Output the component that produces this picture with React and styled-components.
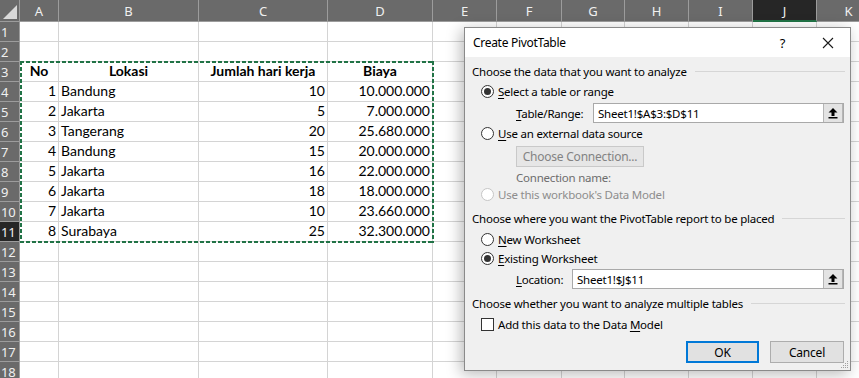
import React from 'react';
import styled, { createGlobalStyle } from 'styled-components';

const GlobalStyle = createGlobalStyle`
  html, body {
    margin: 0;
    padding: 0;
    background: #ffffff;
    overflow: hidden;
  }
`;

const COLS = ['A', 'B', 'C', 'D', 'E', 'F', 'G', 'H', 'I', 'J', 'K'];
const WIDTHS = [39, 140, 129, 105, 64, 65, 63, 64, 64, 64, 64];
const ROW_COUNT = 19;
const ACTIVE_COL = 'J';
const ACTIVE_ROW = 11;

const data = [
  ['1', 'Bandung', '10', '10.000.000'],
  ['2', 'Jakarta', '5', '7.000.000'],
  ['3', 'Tangerang', '20', '25.680.000'],
  ['4', 'Bandung', '15', '20.000.000'],
  ['5', 'Jakarta', '16', '22.000.000'],
  ['6', 'Jakarta', '18', '18.000.000'],
  ['7', 'Jakarta', '10', '23.660.000'],
  ['8', 'Surabaya', '25', '32.300.000'],
];

const Page = styled.div`
  position: relative;
  width: 859px;
  height: 378px;
  overflow: hidden;
`;

const Sheet = styled.div`
  display: grid;
  grid-template-columns: 20px ${WIDTHS.map((w) => w + 'px').join(' ')};
  grid-template-rows: 22px repeat(${ROW_COUNT}, 20px);
  font-family: Lato, 'Liberation Sans', sans-serif;
  font-size: 14px;
  color: #000;
`;

const Corner = styled.div`
  background: #6a6a6a;
  border-right: 1px solid #9c9c9c;
  border-bottom: 1px solid #9c9c9c;
  box-sizing: border-box;
  position: relative;
  &::after {
    content: '';
    position: absolute;
    right: 2px;
    bottom: 2px;
    border-left: 14px solid transparent;
    border-bottom: 14px solid #d9d9d9;
  }
`;

const ColHead = styled.div`
  display: flex;
  align-items: center;
  justify-content: center;
  box-sizing: border-box;
  background: ${(p) => (p.$active ? '#262626' : '#6a6a6a')};
  color: #f0f0f0;
  border-right: 1px solid #9c9c9c;
  border-bottom: ${(p) => (p.$active ? '2px solid #217346' : '1px solid #9c9c9c')};
  font-family: 'Noto Sans', 'Liberation Sans', sans-serif;
  font-size: 13px;
  padding-top: 1px;
`;

const RowHead = styled.div`
  display: flex;
  align-items: center;
  justify-content: flex-start;
  padding-left: 1px;
  box-sizing: border-box;
  background: ${(p) => (p.$active ? '#262626' : '#6a6a6a')};
  color: #f0f0f0;
  border-bottom: 1px solid #9c9c9c;
  border-right: 1px solid #9c9c9c;
  font-family: 'Noto Sans', 'Liberation Sans', sans-serif;
  font-size: 13px;
  letter-spacing: -0.3px;
`;

const Cell = styled.div`
  display: flex;
  align-items: flex-end;
  justify-content: ${(p) => p.$align || 'flex-start'};
  box-sizing: border-box;
  border-right: 1px solid #d4d4d4;
  border-bottom: 1px solid #d4d4d4;
  padding: 0 2px 1px 2px;
  font-weight: ${(p) => (p.$bold ? 700 : 400)};
  white-space: nowrap;
  overflow: visible;
  line-height: 18px;
`;

const CopyMarquee = styled.div`
  position: absolute;
  left: 20px;
  top: 61px;
  width: 414px;
  height: 182px;
  pointer-events: none;
  background:
    repeating-linear-gradient(90deg, #217346 0 4px, transparent 4px 6px) top left / 100% 2px no-repeat,
    repeating-linear-gradient(90deg, #217346 0 4px, transparent 4px 6px) bottom left / 100% 2px no-repeat,
    repeating-linear-gradient(180deg, #217346 0 4px, transparent 4px 6px) top left / 2px 100% no-repeat,
    repeating-linear-gradient(180deg, #217346 0 4px, transparent 4px 6px) top right / 2px 100% no-repeat;
`;

const Dialog = styled.div`
  position: absolute;
  left: 464px;
  top: 27px;
  width: 387px;
  height: 344px;
  box-sizing: border-box;
  border: 1px solid #8a8a8a;
  background: #f0f0f0;
  box-shadow: -3px 3px 14px rgba(0, 0, 0, 0.28);
  font-family: 'Noto Sans', 'Open Sans', sans-serif;
  font-size: 11.5px;
  letter-spacing: -0.22px;
  color: #000;
  display: flex;
  flex-direction: column;
`;

const TitleBar = styled.div`
  height: 29px;
  background: #ffffff;
  display: flex;
  align-items: center;
  padding-left: 8px;
  font-size: 12px;
  letter-spacing: -0.3px;
`;

const Title = styled.div`
  flex: 1;
  padding-bottom: 1px;
`;

const TitleButton = styled.div`
  width: 45px;
  display: flex;
  align-items: center;
  justify-content: center;
  font-size: 13px;
`;

const Body = styled.div`
  flex: 1;
  padding: 0 5px 0 7px;
  display: flex;
  flex-direction: column;
  position: relative;
`;

const SectionHead = styled.div`
  display: flex;
  align-items: center;
  height: 16px;
  margin-top: ${(p) => p.$top}px;
  white-space: nowrap;
  &::after {
    content: '';
    flex: 1;
    height: 1px;
    background: #d6d6d6;
    margin-left: 8px;
  }
`;

const OptionRow = styled.div`
  display: flex;
  align-items: center;
  height: 16px;
  margin-top: ${(p) => p.$top}px;
  padding-left: ${(p) => p.$indent || 9}px;
  color: ${(p) => (p.$disabled ? '#8d8d8d' : '#000')};
  white-space: nowrap;
  gap: 4px;
`;

const Radio = styled.span`
  width: 13px;
  height: 13px;
  box-sizing: border-box;
  border-radius: 50%;
  border: 1px solid ${(p) => (p.$disabled ? '#c6c6c6' : '#333333')};
  background: #ffffff;
  display: flex;
  align-items: center;
  justify-content: center;
  &::after {
    content: '';
    width: 7px;
    height: 7px;
    border-radius: 50%;
    background: #333333;
    display: ${(p) => (p.$checked ? 'block' : 'none')};
  }
`;

const Checkbox = styled.span`
  width: 13px;
  height: 13px;
  box-sizing: border-box;
  border: 1px solid #333333;
  background: #ffffff;
`;

const FieldRow = styled.div`
  display: flex;
  align-items: center;
  height: 20px;
  margin-top: ${(p) => p.$top}px;
  padding-left: 44px;
`;

const FieldLabel = styled.span`
  width: ${(p) => p.$width}px;
  flex-shrink: 0;
`;

const Input = styled.div`
  flex: 1;
  height: 20px;
  box-sizing: border-box;
  border: 1px solid #a9a9a9;
  background: #ffffff;
  display: flex;
  align-items: center;
  padding-left: 4px;
  margin-right: 1px;
`;

const InputText = styled.span`
  flex: 1;
`;

const CollapseButton = styled.span`
  width: 20px;
  height: 18px;
  box-sizing: border-box;
  border-left: 1px solid #b5b5b5;
  border-right: 1px solid #b5b5b5;
  background: #e3e3e3;
  display: flex;
  align-items: center;
  justify-content: center;
`;

const PlainButton = styled.div`
  width: ${(p) => p.$width}px;
  height: ${(p) => p.$height || 21}px;
  box-sizing: border-box;
  display: flex;
  align-items: center;
  justify-content: center;
  background: ${(p) => (p.$disabled ? '#e6e6e6' : '#e1e1e1')};
  border: ${(p) => (p.$default ? '2px solid #0078d7' : p.$disabled ? '1px solid #c9c9c9' : '1px solid #adadad')};
  color: ${(p) => (p.$disabled ? '#838383' : '#000')};
  font-size: 12px;
`;

const ConnectionButtonRow = styled.div`
  margin-top: 5px;
  padding-left: 44px;
  display: flex;
`;

const MutedLine = styled.div`
  margin-top: 2px;
  height: 16px;
  padding-left: 44px;
  color: #6d6d6d;
  display: flex;
  align-items: center;
`;

const ButtonBar = styled.div`
  display: flex;
  justify-content: flex-end;
  gap: 11px;
  margin-top: 9px;
  padding-right: 1px;
`;

const Grip = styled.svg`
  position: absolute;
  right: 1px;
  bottom: 1px;
`;

const U = styled.span`
  text-decoration: underline;
  text-underline-offset: 2px;
`;

const UploadIcon = () => (
  <svg width="12" height="12" viewBox="0 0 12 12">
    <path d="M6 1 L10.5 5.5 H7.5 V9 H4.5 V5.5 H1.5 Z" fill="#000" />
    <rect x="1.5" y="10" width="9" height="1.5" fill="#000" />
  </svg>
);

const CloseIcon = () => (
  <svg width="12" height="12" viewBox="0 0 12 12">
    <path d="M1 1 L11 11 M11 1 L1 11" stroke="#1a1a1a" strokeWidth="1.1" fill="none" />
  </svg>
);

const cellFor = (row, colIndex) => {
  if (row === 3) {
    const heads = ['No', 'Lokasi', 'Jumlah hari kerja', 'Biaya'];
    if (colIndex < 4) return { text: heads[colIndex], bold: true, align: 'center' };
  }
  if (row >= 4 && row <= 11 && colIndex < 4) {
    const values = data[row - 4];
    const aligns = ['flex-end', 'flex-start', 'flex-end', 'flex-end'];
    return { text: values[colIndex], align: aligns[colIndex] };
  }
  return { text: '' };
};

const App = () => {
  const rows = Array.from({ length: ROW_COUNT }, (_, i) => i + 1);

  return (
    <Page>
      <GlobalStyle />
      <Sheet>
        <Corner />
        {COLS.map((c) => (
          <ColHead key={c} $active={c === ACTIVE_COL}>{c}</ColHead>
        ))}
        {rows.map((r) => (
          <React.Fragment key={r}>
            <RowHead $active={r === ACTIVE_ROW}>{r}</RowHead>
            {COLS.map((c, ci) => {
              const cell = cellFor(r, ci);
              return (
                <Cell key={c} $align={cell.align} $bold={cell.bold}>{cell.text}</Cell>
              );
            })}
          </React.Fragment>
        ))}
      </Sheet>
      <CopyMarquee />

      <Dialog>
        <TitleBar>
          <Title>Create PivotTable</Title>
          <TitleButton>?</TitleButton>
          <TitleButton><CloseIcon /></TitleButton>
        </TitleBar>
        <Body>
          <SectionHead $top={6}>Choose the data that you want to analyze</SectionHead>
          <OptionRow $top={4}>
            <Radio $checked />
            <span><U>S</U>elect a table or range</span>
          </OptionRow>
          <FieldRow $top={4}>
            <FieldLabel $width={77}><U>T</U>able/Range:</FieldLabel>
            <Input>
              <InputText>Sheet1!$A$3:$D$11</InputText>
              <CollapseButton><UploadIcon /></CollapseButton>
            </Input>
          </FieldRow>
          <OptionRow $top={2}>
            <Radio />
            <span><U>U</U>se an external data source</span>
          </OptionRow>
          <ConnectionButtonRow>
            <PlainButton $width={128} $height={21} $disabled>Choose Connection...</PlainButton>
          </ConnectionButtonRow>
          <MutedLine>Connection name:</MutedLine>
          <OptionRow $top={1} $disabled>
            <Radio $disabled />
            <span>Use this workbook's Data Model</span>
          </OptionRow>
          <SectionHead $top={8}>Choose where you want the PivotTable report to be placed</SectionHead>
          <OptionRow $top={5}>
            <Radio />
            <span><U>N</U>ew Worksheet</span>
          </OptionRow>
          <OptionRow $top={3}>
            <Radio $checked />
            <span><U>E</U>xisting Worksheet</span>
          </OptionRow>
          <FieldRow $top={3}>
            <FieldLabel $width={56}><U>L</U>ocation:</FieldLabel>
            <Input>
              <InputText>Sheet1!$J$11</InputText>
              <CollapseButton><UploadIcon /></CollapseButton>
            </Input>
          </FieldRow>
          <SectionHead $top={6}>Choose whether you want to analyze multiple tables</SectionHead>
          <OptionRow $top={5}>
            <Checkbox />
            <span>Add this data to the Data <U>M</U>odel</span>
          </OptionRow>
          <ButtonBar>
            <PlainButton $width={73} $height={22} $default>OK</PlainButton>
            <PlainButton $width={74} $height={22}>Cancel</PlainButton>
          </ButtonBar>
          <Grip width="10" height="10" viewBox="0 0 10 10">
            <rect x="8" y="2" width="1" height="1" fill="#a0a0a0" />
            <rect x="6" y="4" width="1" height="1" fill="#a0a0a0" />
            <rect x="8" y="4" width="1" height="1" fill="#a0a0a0" />
            <rect x="4" y="6" width="1" height="1" fill="#a0a0a0" />
            <rect x="6" y="6" width="1" height="1" fill="#a0a0a0" />
            <rect x="8" y="6" width="1" height="1" fill="#a0a0a0" />
            <rect x="2" y="8" width="1" height="1" fill="#a0a0a0" />
            <rect x="4" y="8" width="1" height="1" fill="#a0a0a0" />
            <rect x="6" y="8" width="1" height="1" fill="#a0a0a0" />
            <rect x="8" y="8" width="1" height="1" fill="#a0a0a0" />
          </Grip>
        </Body>
      </Dialog>
    </Page>
  );
};

export default App;
